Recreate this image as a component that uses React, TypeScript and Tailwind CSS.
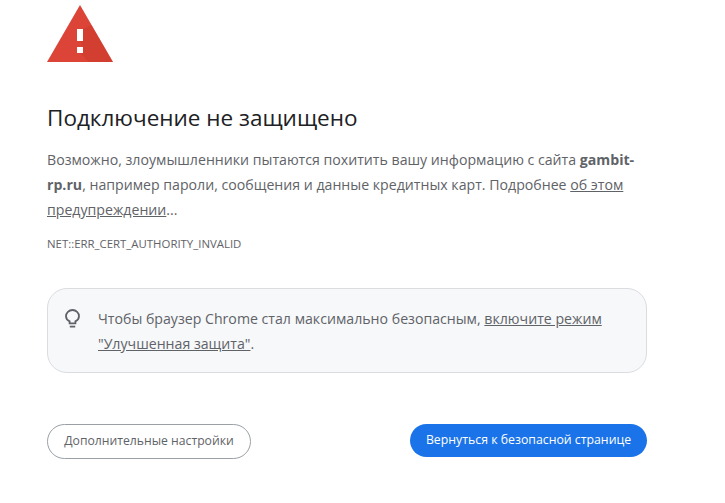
import React from 'react';

const FONT = "font-['Open_Sans','Noto_Sans',sans-serif]";

const WarningIcon = () => (
  <svg width="66" height="57" viewBox="0 0 66 57" className="block">
    <path d="M33 0 L66 57 L0 57 Z" fill="#db4437" />
    <path d="M36 24 L36 36 L33 36 L36 42 L36 48 L33 48 L42 57 L66 57 L44.5 20 Z" fill="#c53929" opacity="0.4" />
    <rect x="30" y="24" width="6" height="12" fill="#fff" />
    <rect x="30" y="42" width="6" height="6" fill="#fff" />
  </svg>
);

const BulbIcon = () => (
  <svg width="15" height="19" viewBox="0 0 15 19" fill="none" stroke="#5f6368" strokeWidth="1.8" className="block">
    <path d="M4.6 12.4 C2.4 11.2 1 9.4 1 7.2 C1 3.7 3.9 1 7.5 1 C11.1 1 14 3.7 14 7.2 C14 9.4 12.6 11.2 10.4 12.4 L10.4 14.4 L4.6 14.4 Z" />
    <path d="M4.8 17.6 L10.2 17.6" />
  </svg>
);

export default function App() {
  return (
    <div className={`${FONT} w-[725px] h-[503px] bg-white overflow-hidden pl-[47px] pt-[5px] text-[#5f6368]`}>
      <div className="w-[600px]">
        <WarningIcon />
        <h1 className="mt-[40px] text-[22.5px] leading-[32px] font-normal text-[#202124]">Подключение не защищено</h1>
        <p className="mt-[13px] text-[14.15px] leading-[25px]">
          Возможно, злоумышленники пытаются похитить вашу информацию с сайта <b className="font-bold">gambit-<br />rp.ru</b>, например пароли, сообщения и данные кредитных карт. Подробнее <u>об этом<br />предупреждении</u>...
        </p>
        <div className="mt-[14px] text-[11.4px] leading-[16px]">NET::ERR_CERT_AUTHORITY_INVALID</div>
        <div className="mt-[36px] h-[85px] flex rounded-[20px] border border-[#dadce0] bg-[#f7f8fa] pl-[17px] pt-[17px]">
          <div className="w-[33px] shrink-0 pt-[3px]">
            <BulbIcon />
          </div>
          <p className="text-[14.15px] leading-[25px]">
            Чтобы браузер Chrome стал максимально безопасным, <u>включите режим<br />"Улучшенная защита"</u>.
          </p>
        </div>
        <div className="mt-[51px] flex items-start justify-between">
          <button className="h-[35px] w-[204px] rounded-full border border-[#9aa0a6] bg-white text-[12.2px] text-[#5f6368]">Дополнительные настройки</button>
          <button className="h-[33px] w-[237px] rounded-full bg-[#1a73e8] text-[12.3px] text-white">Вернуться к безопасной странице</button>
        </div>
      </div>
    </div>
  );
}
